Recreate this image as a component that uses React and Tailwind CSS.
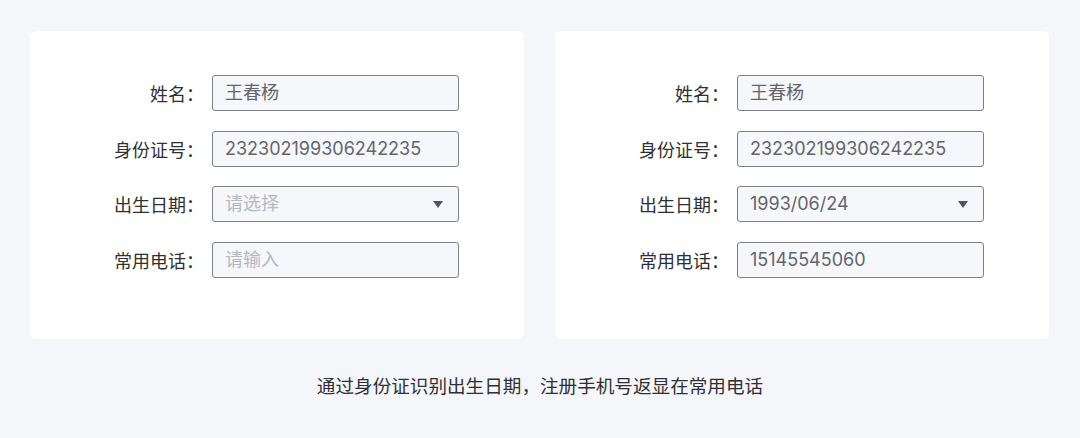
import React from 'react';

const rowsA = [
  { label: '姓名：', value: '王春杨' },
  { label: '身份证号：', value: '232302199306242235' },
  { label: '出生日期：', placeholder: '请选择', select: true },
  { label: '常用电话：', placeholder: '请输入' },
];

const rowsB = [
  { label: '姓名：', value: '王春杨' },
  { label: '身份证号：', value: '232302199306242235' },
  { label: '出生日期：', value: '1993/06/24', select: true },
  { label: '常用电话：', value: '15145545060' },
];

function Field({ row }) {
  return (
    <div className="flex items-center h-[36px]">
      <div className="w-[174px] text-right text-[18px] text-[#2f3033] leading-none">{row.label}</div>
      <div className="ml-[8px] w-[247px] h-[36px] flex items-center justify-between pl-[12px] pr-[15px] bg-[#f6f7fa] border-[1.5px] border-[#7c7f87] rounded-[3px]">
        <span
          className={
            'text-[18px] leading-none font-[Inter,"Noto_Sans_CJK_SC",sans-serif] ' +
            (row.value ? 'text-[#62666c]' : 'text-[#b3b8c2]')
          }
        >
          {row.value || row.placeholder}
        </span>
        {row.select && (
          <svg width="10" height="7" viewBox="0 0 10 7">
            <path d="M0 0H10L5 7Z" fill="#50555c" />
          </svg>
        )}
      </div>
    </div>
  );
}

function Card({ rows }) {
  return (
    <div className="w-[494px] h-[308px] bg-white rounded-[6px] pt-[44px] flex flex-col gap-[19.5px]">
      {rows.map((r) => (
        <Field key={r.label} row={r} />
      ))}
    </div>
  );
}

export default function App() {
  return (
    <div className="w-[1080px] h-[438px] bg-[#f5f6fa] font-['Noto_Sans_CJK_SC',sans-serif] pt-[31px] pl-[30px]">
      <div className="flex gap-[31px]">
        <Card rows={rowsA} />
        <Card rows={rowsB} />
      </div>
      <div className="w-[1020px] text-center mt-[37px] text-[18.6px] text-[#2f3033] leading-none">
        通过身份证识别出生日期，注册手机号返显在常用电话
      </div>
    </div>
  );
}
